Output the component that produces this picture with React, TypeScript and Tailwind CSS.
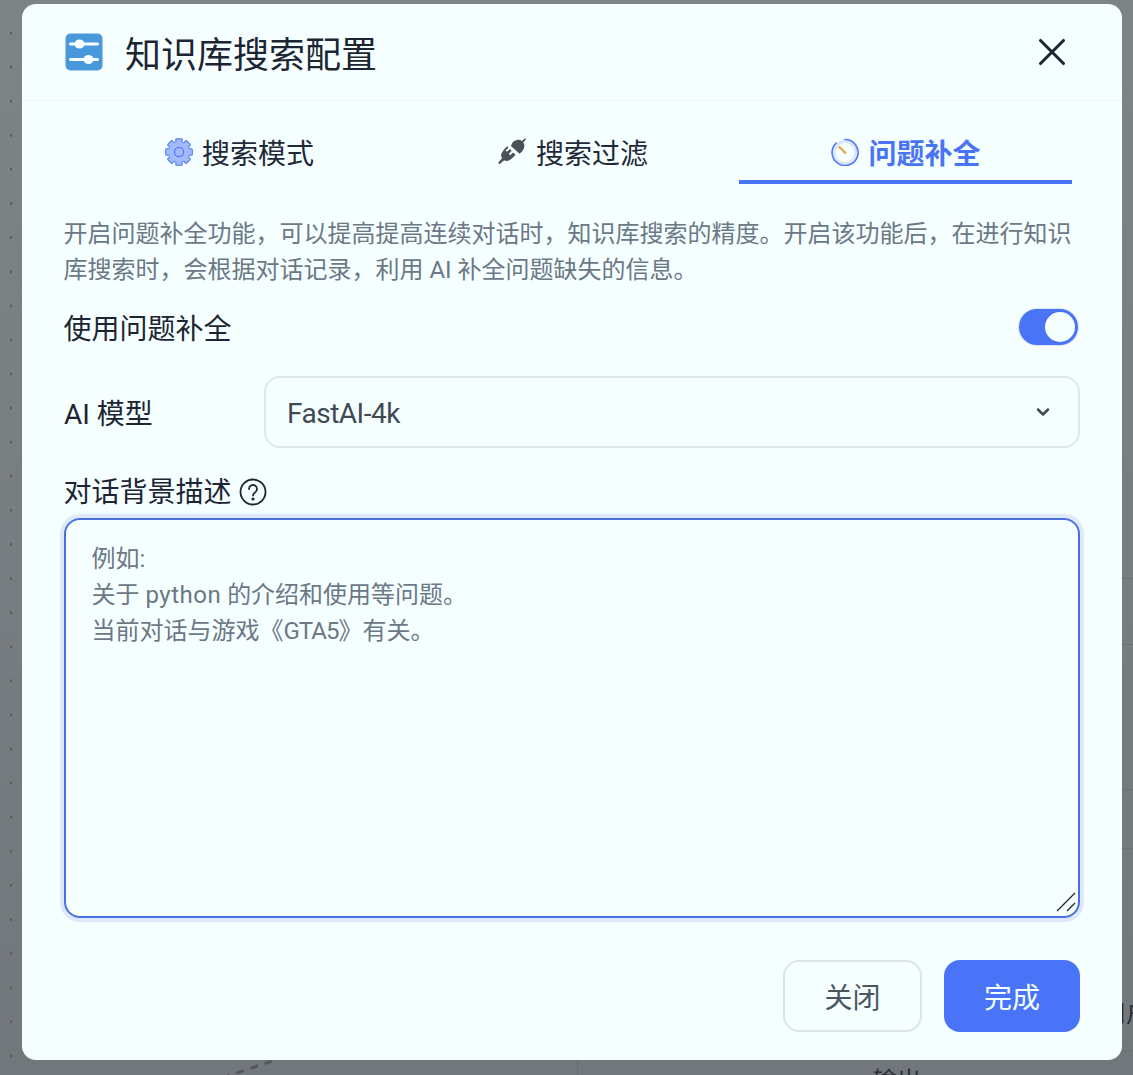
import { X, ChevronDown } from "lucide-react";

const FONT = "font-['Roboto','Noto_Sans_CJK_SC',sans-serif]";

function ConfigIcon() {
  return (
    <svg width="38" height="38" viewBox="0 0 38 38" className="shrink-0">
      <rect x="0.5" y="0.5" width="37" height="37" rx="5" fill="#4a98dc" />
      <path d="M5.500 11h27M5.500 26.500h27" stroke="#f5ffff" strokeWidth="3" strokeLinecap="round" />
      <ellipse cx="14.500" cy="11" rx="5" ry="4.500" fill="#f5ffff" />
      <ellipse cx="23.500" cy="26.500" rx="5" ry="4.500" fill="#f5ffff" />
    </svg>
  );
}

function GearIcon() {
  const teeth = [0, 45, 90, 135, 180, 225, 270, 315];
  return (
    <svg width="28" height="28" viewBox="0 0 28 28" className="shrink-0">
      {teeth.map((a) => (
        <rect key={a} x="10.800" y="0.700" width="6.400" height="6" rx="1" fill="#a3bafb" stroke="#4f78f5" strokeWidth="1.100" transform={`rotate(${a} 14 14)`} />
      ))}
      <circle cx="14" cy="14" r="10" fill="#a3bafb" />
      <circle cx="14" cy="14" r="4.600" fill="#a3bafb" stroke="#4f78f5" strokeWidth="1.200" />
    </svg>
  );
}

function PlugIcon() {
  return (
    <svg width="30" height="30" viewBox="0 0 28 28" className="shrink-0 -translate-y-px" fill="#4b5257">
      <path d="M14.500 6c2.800-2.700 6.800-3.200 8.700-1.300l3-2.500.9.900-2.600 3c1.800 2.100 1.300 5.800-1.400 8.500l-2 2L13 9.400z" />
      <path d="M9.500 9.500c-1 1-4.300 4.300-5.300 6.800-.6 1.500-.4 3 .5 4.200L1.100 25l1.300 1.300 4.300-3.700c1.400.9 3.100.8 4.700 0 2.400-1.200 4.800-3.800 5.900-5l-2.300-2.300-2.700 2.600-1.300-1.300 2.700-2.700-1.700-1.700-2.700 2.600-1.300-1.300 2.700-2.600z" />
    </svg>
  );
}

function TimerIcon() {
  return (
    <svg width="28" height="28" viewBox="0 0 28 28" className="ml-px shrink-0">
      <circle cx="14" cy="14.500" r="11" fill="#f5ffff" stroke="#dbe6fd" strokeWidth="3" />
      <path d="M14 1.500A13 13 0 1 1 5.200 5" fill="none" stroke="#4f78f5" strokeWidth="1.600" strokeLinecap="round" />
      <path d="M8.500 9l5.800 5.800" stroke="#e8a94b" strokeWidth="2.400" strokeLinecap="round" />
    </svg>
  );
}

function Tab({ icon, label, active }: { icon: React.ReactNode; label: string; active?: boolean }) {
  return (
    <div
      className={`flex h-[64px] w-[333px] items-center justify-center gap-[9px] border-b-[4px] pt-[4px] text-[28px] ${
        active ? "border-[#4a74f6] font-bold text-[#4a74f6]" : "border-transparent text-[#1f2937]"
      }`}
    >
      {icon}
      <span className="translate-y-[3px]">{label}</span>
    </div>
  );
}

const LINES = ["top-[578px]", "top-[644px]", "top-[789px]", "top-[848px]", "top-[1050px]"];

export default function App() {
  return (
    <div className={`relative h-[1075px] w-[1133px] overflow-hidden bg-gradient-to-b from-[#7e8486] to-[#72777c] pl-[22px] pt-[4px] ${FONT}`}>
      {/* canvas behind the modal */}
      <div className="absolute left-0 top-0 h-full w-[22px] bg-[radial-gradient(circle,#565b5e_1px,transparent_1.5px)] bg-[length:22px_34.1px] bg-[position:0_16px]" />
      <div className="absolute bottom-0 left-[577px] h-[15px] w-px bg-[#666b70]" />
      {LINES.map((top) => (
        <div key={top} className={`absolute left-[1122px] h-px w-[11px] bg-[#6c7176] ${top}`} />
      ))}
      <span className="absolute left-[1102px] top-[999px] whitespace-nowrap text-[24px] leading-[30px] text-[#2a2f35]">用户</span>
      <span className="absolute left-[873px] top-[1066px] whitespace-nowrap text-[24px] leading-[30px] text-[#2a2f35]">输出</span>
      <svg width="60" height="20" viewBox="0 0 60 20" className="absolute left-[222px] top-[1058px]">
        <path d="M0 20L50 3" stroke="#53585f" strokeWidth="3" strokeDasharray="8 7" />
      </svg>

      <div className="relative flex h-[1056px] w-[1100px] flex-col rounded-[14px] bg-[#f5ffff] text-[#1d2532]">
        <header className="flex h-[97px] items-center border-b border-[#ecf6f6] pl-[43px] pr-[47px]">
          <ConfigIcon />
          <h1 className="ml-[22px] flex-1 pt-[7px] text-[36px] font-normal leading-[48px] text-[#1d2532]">知识库搜索配置</h1>
          <X size={46} strokeWidth={1.6} className="text-[#1d2532]" />
        </header>

        <div className="flex flex-1 flex-col pl-[42px] pr-[42px]">
          <nav className="ml-[9px] mt-[19px] flex">
            <Tab icon={<GearIcon />} label="搜索模式" />
            <Tab icon={<PlugIcon />} label="搜索过滤" />
            <Tab icon={<TimerIcon />} label="问题补全" active />
          </nav>

          <p className="-ml-[0.5px] mt-[32px] w-[1012px] text-[24px] leading-[36px] text-[#6b7885]">
            开启问题补全功能，可以提高提高连续对话时，知识库搜索的精度。开启该功能后，在进行知识库搜索时，会根据对话记录，利用 AI 补全问题缺失的信息。
          </p>

          <div className="mt-[15px] flex h-[48px] items-center justify-between">
            <span className="-ml-[0.5px] pt-[5px] text-[28px] leading-[40px]">使用问题补全</span>
            <div className="mr-[2px] flex h-[36px] w-[59px] items-center justify-end rounded-full bg-[#4a74f6] pr-[3px] shadow-[0_0_0_1px_#dbe6fb]">
              <div className="h-[30px] w-[30px] rounded-full bg-[#f5ffff]" />
            </div>
          </div>

          <div className="mt-[25px] flex items-center">
            <span className="w-[200px] pt-[6px] text-[28px] leading-[40px]">AI 模型</span>
            <div className="flex h-[72px] flex-1 items-center justify-between rounded-[16px] border-2 border-[#dbe7e9] pl-[21px] pr-[25px] text-[28px] text-[#3f4a55]">
              <span className="pt-[4px] tracking-[-0.5px]">FastAI-4k</span>
              <ChevronDown size={20} strokeWidth={3} className="text-[#3f4a55]" />
            </div>
          </div>

          <div className="mt-[24px] flex items-center gap-[7px]">
            <span className="-ml-[0.5px] translate-y-px text-[28px] leading-[40px]">对话背景描述</span>
            <svg width="28" height="28" viewBox="0 0 28 28" fill="none" stroke="#1d2532" strokeWidth="1.800">
              <circle cx="14" cy="14" r="12.500" />
              <path d="M10 11a4 4 0 1 1 6 3.500c-1.300.8-2 1.500-2 3" strokeLinecap="round" />
              <circle cx="14" cy="21" r="0.700" fill="#1d2532" />
            </svg>
          </div>

          <div className="relative mt-[6px] h-[400px] rounded-[16px] border-2 border-[#4a70e0] py-[21px] pl-[25.5px] pr-[26px] text-[24px] leading-[36px] text-[#6b7885] shadow-[0_0_0_4px_#dde8fb]">
            <p>例如:</p>
            <p>
              关于 <span className="tracking-[0.5px]">python</span> 的介绍和使用等问题。
            </p>
            <p>
              当前对话与游戏《<span className="tracking-[-1px]">GTA5</span>》有关。
            </p>
            <svg width="22" height="22" viewBox="0 0 22 22" className="absolute bottom-[3px] right-px" stroke="#222" strokeWidth="1.200">
              <path d="M2 20L20 2M12 20L20 12" />
            </svg>
          </div>

          <footer className="mt-[42px] flex justify-end gap-[22px]">
            <div className="flex h-[72px] w-[139px] items-center justify-center rounded-[16px] border-2 border-[#dbe4e8] pt-[6px] text-[28px] text-[#4c5660]">关闭</div>
            <div className="flex h-[72px] w-[136px] items-center justify-center rounded-[16px] bg-[#4a74f8] pt-[6px] text-[28px] text-[#f5ffff]">完成</div>
          </footer>
        </div>
      </div>
    </div>
  );
}
